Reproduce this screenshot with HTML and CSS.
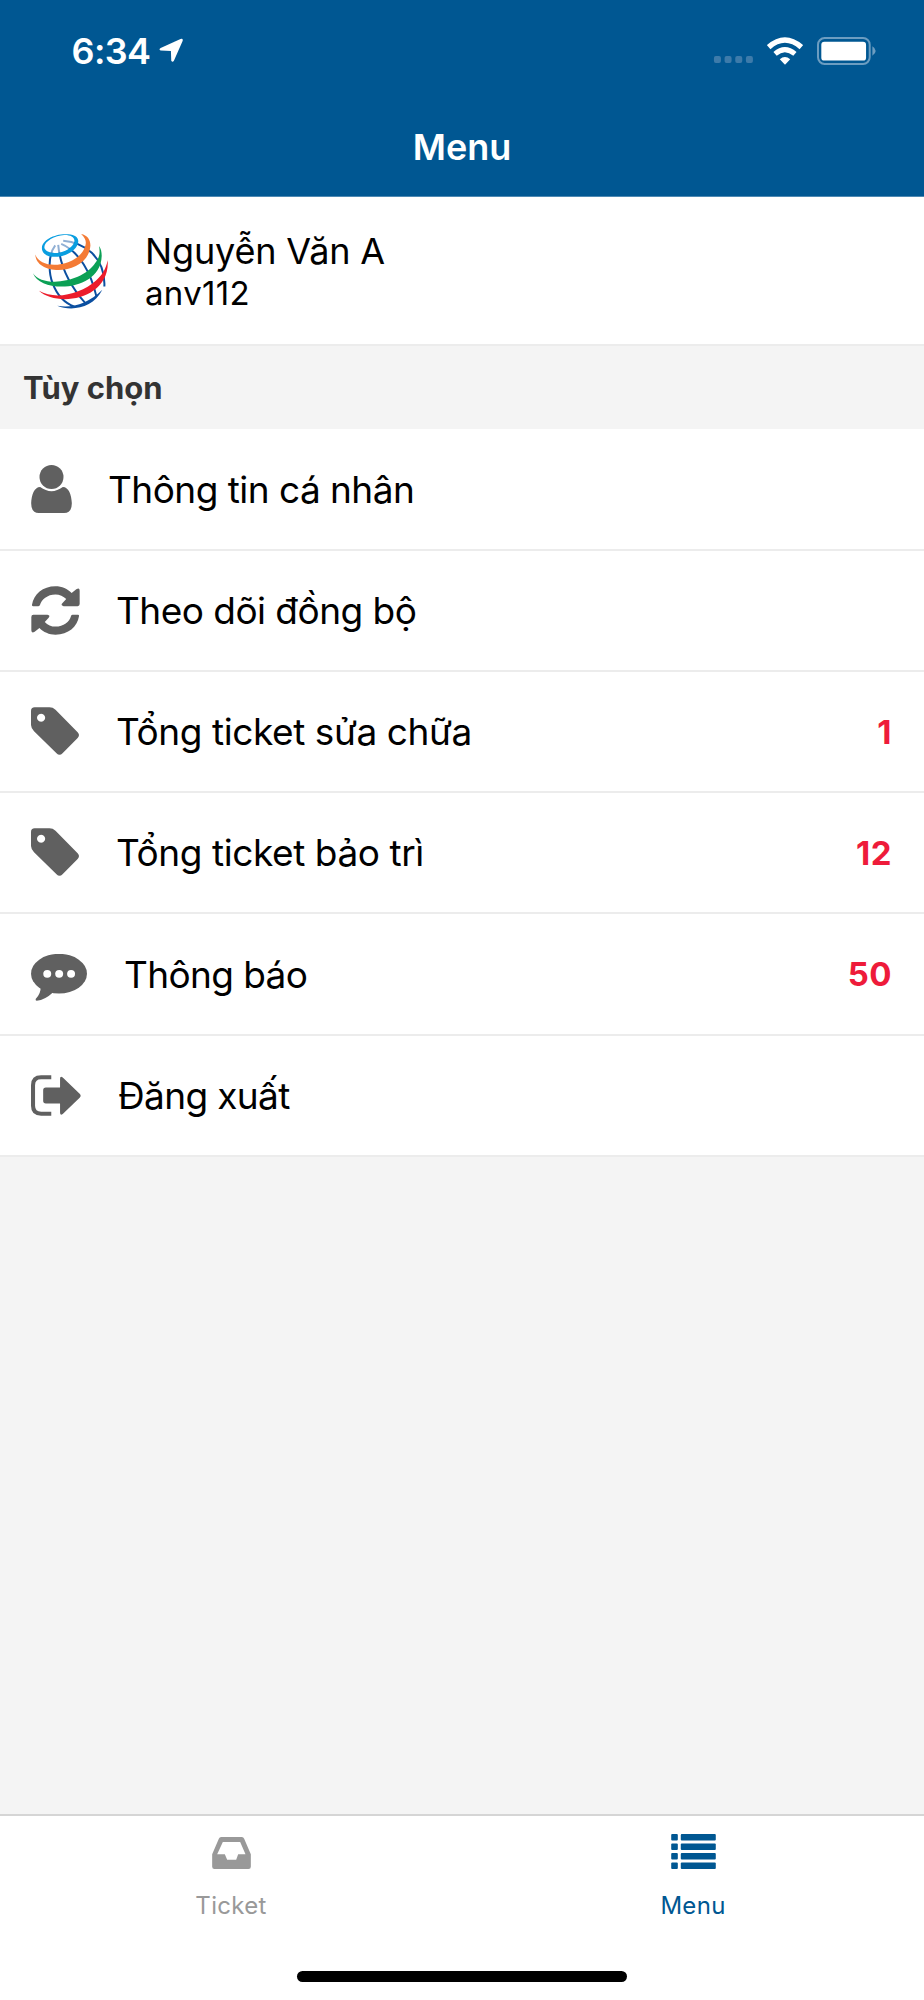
FILE: index.html
```html
<!DOCTYPE html>
<html lang="vi">
<head>
<meta charset="utf-8">
<title>Menu</title>
<link rel="stylesheet" href="styles.css">
</head>
<body>
<div class="app">
  <header class="header">
    <div class="status">
      <div class="status-left">
        <span class="clock">6:34</span>
        <svg class="location" viewBox="358 84 74 74"><path d="M363 114 L423 87 Q432 84 429 94 L403 153 Q399 159 395 153 L394 123 L363 122 Q356 118 363 114Z" fill="#fff"/></svg>
      </div>
      <div class="status-right">
        <svg class="dots" viewBox="68 108 123 22" fill="#3d7baa"><rect x="68" y="108" width="22" height="22" rx="6"/><rect x="101.500" y="108" width="22" height="22" rx="6"/><rect x="135" y="108" width="22" height="22" rx="6"/><rect x="168.500" y="108" width="22" height="22" rx="6"/></svg>
        <svg class="wifi" viewBox="232 49 107 83" fill="none" stroke="#fff"><path d="M237 79 Q285 37 334 79" stroke-width="16"/><path d="M256 99 Q285 74 315 99" stroke-width="15"/><path d="M285.500 131 L270 115 Q285 101 301 115Z" fill="#fff" stroke="none"/></svg>
        <svg class="battery" viewBox="380 49 178 84"><rect x="383" y="52" width="156" height="78" rx="20" fill="none" stroke="#6c9dc1" stroke-width="6"/><rect x="393" y="63" width="135" height="57" rx="9" fill="#fff"/><path d="M547 77 Q557 83 557 91 Q557 99 547 105Z" fill="#6c9dc1"/></svg>
      </div>
    </div>
    <h1 class="title">Menu</h1>
  </header>

  <section class="profile">
    <svg class="avatar" viewBox="36 40 232 230" fill="none">
      <g stroke="#0b4fa0" stroke-width="6">
        <path d="M106 76 C84 104 86 160 98 190 C112 228 134 250 164 261"/>
        <path d="M115 75 C119 120 138 185 198 252"/>
        <path d="M124 72 C180 96 214 160 230 230"/>
        <path d="M130 62 C190 66 258 110 254 200"/>
      </g>
      <path d="M112 258 C155 267 205 252 248 210 C220 266 155 276 112 258Z" fill="#0b4fa0"/>
      <path d="M74 86 C86 109 143 101 161 72 C171 54 153 44 133 45 C102 47 68 67 74 86Z" fill="#fff" fill-opacity=".55"/>
      <path fill-rule="evenodd" d="M67 92 C58 62 106 39 145 43 C176 46 182 62 169 82 C144 117 74 120 67 92Z M74 86 C86 109 143 101 161 72 C171 54 153 44 133 45 C102 47 68 67 74 86Z" fill="#0a9ee0"/>
      <path d="M46 104 C48 172 206 168 212 77 C212 57 202 46 184 42 C199 56 201 68 195 82 C176 138 64 156 46 104Z" fill="#f47b35"/>
      <path d="M39 160 C62 223 243 217 246 108 C246 96 244 87 238 78 C242 100 239 114 227 129 C188 190 67 204 39 160Z" fill="#0ba055"/>
      <path d="M57 213 C112 264 272 240 264 121 C258 150 246 167 229 182 C183 223 107 242 57 213Z" fill="#ec1c2b"/>
    </svg>
    <div class="identity">
      <span class="name">Nguyễn Văn A</span>
      <span class="login">anv112</span>
    </div>
  </section>

  <h2 class="section">Tùy chọn</h2>

  <nav class="list">
    <a class="row">
      <svg class="icon-person" viewBox="93 375 122 144" fill="#606060"><circle cx="154" cy="411" r="36"/><path d="M120 441 Q154 466 188 441 C206 441 214 465 215 490 Q215 519 192 519 H116 Q93 519 93 490 C94 465 102 441 120 441Z"/></svg>
      <span class="label">Thông tin cá nhân</span>
    </a>
    <a class="row">
      <svg class="icon-sync" viewBox="93 78 146 146" fill="#606060"><path id="half" d="M99 138 Q95 138 96 134 C101 103 128 79 166 79 C185 79 202 87 214 99 L228 88 Q238 82 238 92 V132 Q238 138 232 138 H190 Q180 136 187 129 L198 117 C190 108 178 103 166 103 C142 103 124 118 120 134 Q119 138 115 138Z"/><use href="#half" transform="rotate(180 166 151)"/></svg>
      <span class="label">Theo dõi đồng bộ</span>
    </a>
    <a class="row">
      <svg class="icon-tag" viewBox="93 441 146 146" fill="#606060"><path fill-rule="evenodd" d="M104 442 H148 Q158 442 166 449 L232 516 Q240 525 232 533 L187 579 Q178 588 169 579 L102 513 Q93 504 93 495 V453 Q93 442 104 442Z M123 461 a12 12 0 1 0 .1 0Z"/></svg>
      <span class="label label-wide">Tổng ticket sửa chữa</span>
      <span class="badge">1</span>
    </a>
    <a class="row">
      <svg class="icon-tag" viewBox="93 441 146 146" fill="#606060"><path fill-rule="evenodd" d="M104 442 H148 Q158 442 166 449 L232 516 Q240 525 232 533 L187 579 Q178 588 169 579 L102 513 Q93 504 93 495 V453 Q93 442 104 442Z M123 461 a12 12 0 1 0 .1 0Z"/></svg>
      <span class="label label-wide">Tổng ticket bảo trì</span>
      <span class="badge">12</span>
    </a>
    <a class="row">
      <svg class="icon-chat" viewBox="93 462 169 142" fill="#606060"><ellipse cx="177.500" cy="521.500" rx="84.500" ry="60"/><path d="M122 562 Q123 582 107 598 Q106 603 110 603 Q136 600 159 578Z"/><g fill="#fff"><circle cx="142" cy="522" r="12"/><circle cx="178" cy="522" r="12"/><circle cx="214" cy="522" r="12"/></g></svg>
      <span class="label label-tight">Thông báo</span>
      <span class="badge">50</span>
    </a>
    <a class="row">
      <svg class="icon-exit" viewBox="93 135 148 121" fill="#606060"><path d="M153 141.500 H123 Q99 141.500 99 165 V226 Q99 249.500 123 249.500 H153" fill="none" stroke="#606060" stroke-width="12"/><path d="M179 146 Q179 136 187 142 L237 190 Q243 196 237 202 L187 250 Q179 256 179 246 V219 H137 Q129 219 129 211 V180 Q129 172 137 172 H179Z"/></svg>
      <span class="label label-tight">Đăng xuất</span>
    </a>
  </nav>

  <footer class="footer">
    <div class="tabs">
      <a class="tab">
        <svg class="icon-inbox" viewBox="126 111 116 96" fill="#999"><path fill-rule="evenodd" d="M153 111 H215 Q220 111 222 116 L242 163 V200 Q242 207 235 207 H133 Q126 207 126 200 V163 L146 116 Q148 111 153 111Z M158 126 L141 163 H164 L171 179 H198 L204 163 H226 L210 126Z"/></svg>
        <span class="tab-label">Ticket</span>
      </a>
      <a class="tab active">
        <svg class="icon-list" viewBox="213 101 135 106" fill="#005792"><rect x="213" y="101" width="20" height="19.500" rx="3"/><rect x="242" y="101" width="106" height="19.500" rx="3"/><rect x="213" y="130" width="20" height="19.500" rx="3"/><rect x="242" y="130" width="106" height="19.500" rx="3"/><rect x="213" y="158.500" width="20" height="19.500" rx="3"/><rect x="242" y="158.500" width="106" height="19.500" rx="3"/><rect x="213" y="187.500" width="20" height="19.500" rx="3"/><rect x="242" y="187.500" width="106" height="19.500" rx="3"/></svg>
        <span class="tab-label">Menu</span>
      </a>
    </div>
    <div class="home"></div>
  </footer>
</div>
</body>
</html>
```
FILE: styles.css
```css
* { box-sizing: border-box; }
body { margin: 0; background: #f4f4f4; font-family: Inter, "Noto Sans", sans-serif; color: #000; }
svg { display: block; flex: none; }
.app { width: 924px; height: 2000px; display: flex; flex-direction: column; background: #f4f4f4; overflow: hidden; }
.header { flex: none; height: 197px; background: #005792; border-bottom: 1px solid #4d89b3; color: #fff; }
.status { height: 98px; padding: 3px 48px 0 71.5px; display: flex; justify-content: space-between; align-items: center; }
.status-left, .status-right { display: flex; align-items: center; }
.clock { font-size: 36px; font-weight: 600; line-height: 44px; letter-spacing: -0.6px; }
.location { width: 24.5px; height: 24.5px; margin-left: 8.5px; }
.dots { width: 41px; height: 7px; margin: 18px 13px 0 0; }
.wifi { width: 36px; height: 28px; margin-right: 14px; }
.battery { width: 59px; height: 28px; }
.title { margin: 0; font-size: 36px; font-weight: 600; line-height: 99px; text-align: center; }
.profile { flex: none; height: 149px; background: #fff; border-bottom: 2px solid #ececec; padding: 1px 32px 0; display: flex; align-items: center; gap: 36px; }
.avatar { width: 77px; height: 77px; }
.identity { display: flex; flex-direction: column; }
.name { font-size: 36px; line-height: 44px; letter-spacing: -0.15px; }
.login { font-size: 33px; line-height: 40px; letter-spacing: 0.3px; }
.section { flex: none; height: 83.4px; margin: 0; padding: 0 23px; font-size: 31px; font-weight: 700; line-height: 84px; color: #333; }
.list { flex: none; background: #fff; }
.row { height: 121.25px; border-bottom: 2px solid #ececec; padding: 0 32px 0 31px; display: flex; align-items: center; gap: 36px; }
.label { padding-top: 1px; font-size: 37px; line-height: 48px; letter-spacing: -0.53px; white-space: nowrap; }
.label-wide { letter-spacing: -0.42px; }
.label-tight { margin-left: 1px; letter-spacing: -0.63px; }
.badge { margin-left: auto; font-size: 33px; font-weight: 700; line-height: 48px; letter-spacing: 0.5px; color: #ee1b3a; }
.icon-person { width: 41px; height: 48px; }
.icon-sync, .icon-tag { width: 49px; height: 49px; }
.icon-chat { width: 56px; height: 47px; margin-top: 7px; }
.icon-exit { width: 50px; height: 41px; }
.footer { flex: none; height: 186px; margin-top: auto; background: #fff; border-top: 2px solid #d5d5d5; }
.tabs { display: flex; height: 155px; }
.tab { flex: 1; display: flex; flex-direction: column; align-items: center; color: #999; }
.active { color: #005792; }
.icon-inbox { width: 39px; height: 32px; margin: 21px 0; }
.icon-list { width: 45px; height: 35px; margin: 18px 0 21px; }
.tab-label { font-size: 24px; line-height: 32px; letter-spacing: 0.3px; }
.home { width: 330px; height: 11px; border-radius: 6px; background: #000; margin: 0 auto; }
```
